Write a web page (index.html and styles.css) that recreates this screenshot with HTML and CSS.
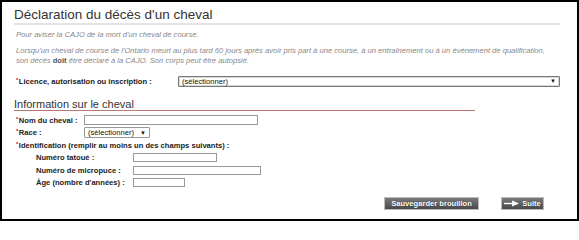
FILE: index.html
```html
<!DOCTYPE html>
<html lang="fr">
<head>
<meta charset="utf-8">
<title>Déclaration du décès d'un cheval</title>
<link rel="stylesheet" href="styles.css">
</head>
<body>
<div class="frame">
  <h1 class="title">Déclaration du décès d'un cheval</h1>
  <p class="intro">Pour aviser la CAJO de la mort d'un cheval de course.</p>
  <p class="intro intro-long"><span class="intro-line">Lorsqu'un cheval de course de l'Ontario meurt au plus tard 60 jours après avoir pris part à une course, à un entraînement ou à un événement de qualification,</span><span class="intro-line">son décès <b>doit</b> être déclaré à la CAJO. Son corps peut être autopsié.</span></p>

  <div class="row licence-row">
    <span class="label licence-label"><span class="req">*</span>Licence, autorisation ou inscription :</span>
    <span class="select select-wide"><span class="select-text">(sélectionner)</span><span class="arrow">&#9660;</span></span>
  </div>

  <h2 class="section">Information sur le cheval</h2>

  <div class="row">
    <span class="label col-main"><span class="req">*</span>Nom du cheval :</span>
    <span class="input input-name"></span>
  </div>
  <div class="row">
    <span class="label col-main"><span class="req">*</span>Race :</span>
    <span class="select select-small"><span class="select-text">(sélectionner)</span><span class="arrow">&#9660;</span></span>
  </div>
  <div class="row">
    <span class="label"><span class="req">*</span>Identification (remplir au moins un des champs suivants) :</span>
  </div>
  <div class="row sub">
    <span class="label col-sub">Numéro tatoué :</span>
    <span class="input input-tattoo"></span>
  </div>
  <div class="row sub">
    <span class="label col-sub">Numéro de micropuce :</span>
    <span class="input input-chip"></span>
  </div>
  <div class="row sub">
    <span class="label col-sub">Âge (nombre d'années) :</span>
    <span class="input input-age"></span>
  </div>

  <div class="actions">
    <span class="btn btn-save">Sauvegarder brouillon</span>
    <span class="btn btn-next"><svg class="btn-icon" width="16" height="7" viewBox="0 0 16 7"><path d="M0 3.5h9" stroke="#fff" stroke-width="1.4"/><path d="M8 0.5l7 3-7 3z" fill="#fff"/></svg>Suite</span>
  </div>
</div>
</body>
</html>
```
FILE: styles.css
```css
html, body {
  margin: 0;
  padding: 0;
  background: #fff;
}
.frame {
  box-sizing: border-box;
  width: 579px;
  height: 221px;
  border: 2px solid #000;
  padding: 5px 17px 0 12px;
  font-family: "Liberation Sans", Arial, sans-serif;
  color: #222;
}
.title {
  margin: 0;
  font-size: 13.5px;
  line-height: 16px;
  font-weight: normal;
  color: #333;
  padding-bottom: 0;
  border-bottom: 2px solid #e4e4e4;
}
.intro {
  margin: 5px 0 0 2px;
  font-size: 7.6px;
  line-height: 10px;
  font-style: italic;
  color: #888;
}
.intro-long {
  margin-top: 6px;
}
.intro-line {
  display: block;
  white-space: nowrap;
}
.intro b {
  color: #555;
  font-style: normal;
}
.row {
  display: flex;
  align-items: center;
  height: 12.5px;
  padding-left: 2px;
}
.licence-row {
  margin-top: 9px;
  height: 12px;
}
.label {
  font-size: 7.6px;
  font-weight: bold;
  color: #222;
  white-space: nowrap;
}
.req {
  color: #d00;
  font-size: 6px;
  vertical-align: 2px;
  margin-right: 0.5px;
}
.licence-label {
  width: 162px;
}
.col-main {
  width: 68px;
  flex: none;
}
.sub {
  padding-left: 22px;
}
.col-sub {
  width: 97px;
  flex: none;
}
.select {
  box-sizing: border-box;
  display: flex;
  align-items: center;
  justify-content: space-between;
  height: 11px;
  border: 1px solid #777;
  border-radius: 1px;
  padding: 0 3px 0 3px;
  font-size: 7.6px;
  color: #111;
  background: #fff;
}
.select-wide {
  width: 382px;
  box-shadow: inset 0 0 0 1px #d8d8d8;
}
.select-small {
  width: 66px;
  border-color: #999;
}
.arrow {
  font-size: 6px;
  color: #111;
}
.input {
  box-sizing: border-box;
  display: block;
  height: 9px;
  border: 1px solid #999;
  background: #fff;
}
.input-name { width: 174px; height: 10px; }
.input-tattoo { width: 84px; }
.input-chip { width: 128px; }
.input-age { width: 52px; }
.section {
  margin: 11px 0 3px 0;
  font-size: 11px;
  line-height: 12px;
  font-weight: normal;
  color: #333;
  width: 461px;
  border-bottom: 1px solid #b87a72;
}
.actions {
  display: flex;
  justify-content: flex-end;
  gap: 22px;
  margin-top: 8px;
  padding-right: 16px;
}
.btn {
  box-sizing: border-box;
  display: flex;
  align-items: center;
  justify-content: center;
  height: 13px;
  border: 1px solid #bbb;
  background: linear-gradient(#7a7a7a, #4a4a4a);
  color: #fff;
  font-size: 7.6px;
  font-weight: bold;
  text-shadow: 0 0 1px #222;
}
.btn-save { width: 95px; }
.btn-next { width: 43px; }
.btn-icon {
  margin-right: 2px;
}
```
